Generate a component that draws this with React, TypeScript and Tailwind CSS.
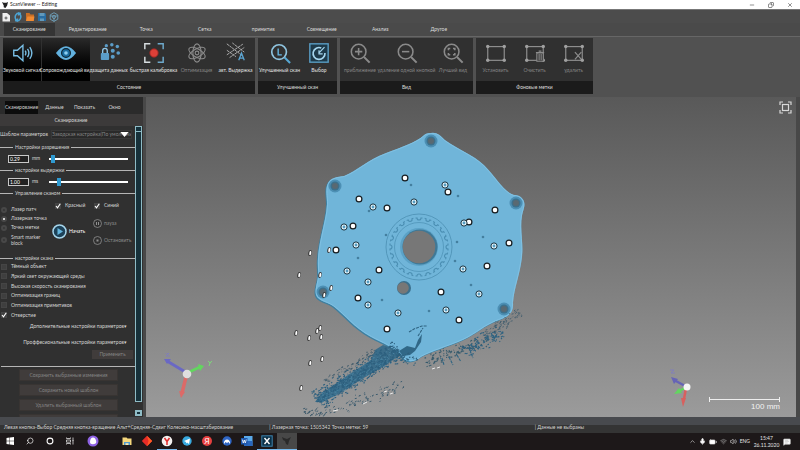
import { useState } from "react";
import type { ReactNode } from "react";
import { BatteryMedium, ChevronUp, Copy, MessageSquareText, Mic, Minus, Search, Volume2, Wifi, X } from "lucide-react";

const tabs = ["Сканирование", "Редактирование", "Точка", "Сетка", "примитив", "Совмещение", "Анализ", "Другое"];
const panelTabs = ["Сканирование", "Данные", "Показать", "Окно"];

const whiteMarks = [[405, 178], [448, 192], [359, 199], [387, 208], [495, 210], [353, 226], [469, 222], [336, 250], [509, 243], [487, 266], [379, 270], [358, 298], [441, 292], [459, 320], [387, 329]];
const blueMarks = [[445, 185], [373, 207], [414, 202], [344, 227], [356, 245], [464, 223], [494, 246], [347, 271], [463, 269], [368, 282], [368, 305], [479, 294], [446, 310], [398, 313]];
const pits = [[411, 185], [458, 196], [483, 237], [358, 258], [369, 211], [382, 300], [429, 311], [471, 285], [386, 235], [457, 242], [455, 261]];
const strays = [[310, 253], [329, 250], [299, 275], [320, 275], [331, 288], [324, 295], [296, 333], [309, 338], [317, 331], [320, 328], [321, 337], [322, 359], [310, 363], [301, 388]];
const lugs = [[431, 141], [335, 186], [516, 203], [323, 292], [504, 309]];

// seeded noise, so the cloud is the same on every render
function cloud(seed: number, n: number, x1: number, y1: number, x2: number, y2: number, spread: number) {
  let s = seed;
  const rnd = () => { s = (s * 16807) % 2147483647; return s / 2147483647; };
  const len = Math.hypot(x2 - x1, y2 - y1);
  let d = "";
  for (let i = 0; i < n; i++) {
    const t = rnd();
    const off = (rnd() + rnd() - 1) * spread;
    const x = x1 + (x2 - x1) * t - ((y2 - y1) / len) * off;
    const y = y1 + (y2 - y1) * t + ((x2 - x1) / len) * off;
    d += `M${x.toFixed(1)} ${y.toFixed(1)}l${(0.5 + rnd() * 1.5).toFixed(1)} ${(-rnd() * 1.2).toFixed(1)}`;
  }
  return d;
}

function Icon({ children, size = "size-[22px]" }: { children: ReactNode; size?: string }) {
  return <svg viewBox="0 0 24 24" className={`${size} shrink-0`} fill="none" stroke="currentColor" strokeWidth="1.5">{children}</svg>;
}

const SoundIcon = <Icon><g stroke="#79bfe6"><path d="M3 9h4l6-5.500v17L7 15H3z" /><path d="M15.500 9.500q1.500 2.500 0 5M18 7.500q3 4.500 0 9M20.500 5.500q4.500 6.500 0 13" /></g></Icon>;
const EyeIcon = <Icon><path d="M1 12Q12-3 23 12Q12 27 1 12z" fill="#62b1df" stroke="none" /><circle cx="12" cy="12" r="4.800" fill="#1b6c9f" stroke="#0d2533" strokeWidth="1.300" /><circle cx="12" cy="12" r="2" fill="#8bcdf0" stroke="none" /></Icon>;
const LockIcon = <Icon><g fill="#5b9dc9" stroke="none"><rect x="2" y="12" width="9" height="7.500" rx="1" /><circle cx="8" cy="4" r="1.800" /><circle cx="14" cy="3" r="1.900" /><circle cx="20" cy="5" r="1.900" /><circle cx="15" cy="9.500" r="2.200" /><circle cx="21" cy="12" r="2" /><circle cx="15" cy="16" r="2.200" /></g><path d="M4 12V9.500a2.500 2.500 0 0 1 5 0V12" stroke="#8fc6e8" /></Icon>;
const CalibIcon = <Icon><path d="M2 8V2h6M2 16v6h6" stroke="#d7dde0" strokeWidth="1.600" /><path d="M16 2h6v6M16 22h6v-6" stroke="#6ea9cb" strokeWidth="1.600" /><circle cx="12" cy="12" r="4.600" fill="#dd4038" stroke="#8e2623" strokeWidth="1" /></Icon>;
const AtomIcon = <Icon><g stroke="#8b8b8b" strokeWidth="1.200"><ellipse cx="12" cy="12" rx="4.500" ry="10" /><ellipse cx="12" cy="12" rx="4.500" ry="10" transform="rotate(60 12 12)" /><ellipse cx="12" cy="12" rx="4.500" ry="10" transform="rotate(120 12 12)" /><circle cx="12" cy="12" r="2" /></g></Icon>;
const ExposureIcon = <Icon><path d="M2 2l17 13M8 1l13 10M2 9l10 7M2 14L20 2M5 17L21 6" stroke="#b4b4b4" strokeWidth="1" strokeDasharray="3 .6" /><path d="M15 20l3-8 3 8M16 17.500h4" stroke="#5aa5d3" strokeWidth="1.400" /></Icon>;
const BetterIcon = <Icon><circle cx="11" cy="11" r="8" stroke="#8fc4df" strokeWidth="1.800" /><path d="M17 17l6 6" stroke="#56a7d3" strokeWidth="2.200" /><path d="M10 7v7h4" stroke="#66b7e2" /></Icon>;
const PickIcon = <Icon><rect x="2" y="2" width="20" height="20" stroke="#5a9fc6" fill="#1d3a4a" /><path d="M14.500 6.500A6.500 6.500 0 1 0 18.500 12" stroke="#a5d6ee" strokeWidth="1.800" /><path d="M11.500 12.500L18 5.500M12 9v4h4" stroke="#a5d6ee" strokeWidth="1.300" /></Icon>;

const Lens = ({ d }: { d: string }) => <Icon><g stroke="#8a8a8a"><circle cx="10.500" cy="10.500" r="8" strokeWidth="1.700" /><path d="M16.500 16.500l6 6" strokeWidth="2.300" /><path d={d} strokeWidth="1.700" /></g></Icon>;
const Frame = ({ children }: { children?: ReactNode }) => (
  <Icon><g stroke="#8d8d8d"><rect x="3" y="5" width="18" height="15" strokeWidth="1.300" /><g fill="#a0a0a0" stroke="none"><circle cx="3" cy="5" r="1.900" /><circle cx="21" cy="5" r="1.900" /><circle cx="3" cy="20" r="1.900" /><circle cx="21" cy="20" r="1.900" /></g>{children}</g></Icon>
);

type Tool = { label: string; icon: ReactNode; w: string; on?: boolean; off?: boolean };
const groups: { title: string; tools: Tool[] }[] = [
  {
    title: "Состояние",
    tools: [
      { label: "Звуковой сигнал", icon: SoundIcon, w: "w-[38px] mr-px", on: true },
      { label: "Сопровождающий вид", icon: EyeIcon, w: "w-[48px]", on: true },
      { label: "защита данных", icon: LockIcon, w: "w-[40px]" },
      { label: "быстрая калибровка", icon: CalibIcon, w: "w-[47px]" },
      { label: "Оптимизация", icon: AtomIcon, w: "w-[39px]", off: true },
      { label: "авт. Выдержка", icon: ExposureIcon, w: "w-[39px]" },
    ],
  },
  {
    title: "Улучшенный скан",
    tools: [
      { label: "Улучшенный скан", icon: BetterIcon, w: "w-[43px]" },
      { label: "Выбор", icon: PickIcon, w: "w-[36px]" },
    ],
  },
  {
    title: "Вид",
    tools: [
      { label: "приближение", icon: <Lens d="M6.500 10.500h8M10.500 6.500v8" />, w: "w-[40px]", off: true },
      { label: "удаление одной кнопкой", icon: <Lens d="M6.500 10.500h8" />, w: "w-[53px]", off: true },
      { label: "Лучший вид", icon: <Lens d="M7 9V7h2M12 7h2v2M14 12v2h-2M9 14H7v-2" />, w: "w-[40px]", off: true },
    ],
  },
  {
    title: "Фоновые метки",
    tools: [
      { label: "Установить", icon: <Frame />, w: "w-[39px]", off: true },
      { label: "Очистить", icon: <Frame><path d="M14 12h7v9h-7zM13 11.500h9M16 10h3M16.500 13v7M18.700 13v7" fill="#303030" strokeWidth="1.200" /></Frame>, w: "w-[39px]", off: true },
      { label: "удалить", icon: <Frame><path d="M13 11l7 8M20 11l-7 8" strokeWidth="1.300" /></Frame>, w: "w-[39px]", off: true },
    ],
  },
];

function Ribbon() {
  return (
    <div className="flex gap-[3px] bg-[#515151] px-[3px] pt-px pb-[3px]">
      {groups.map((g) => (
        <section key={g.title} className="flex flex-col bg-[#303030]">
          <div className="flex h-[43px]">
            {g.tools.map((t) => (
              <button key={t.label} className={`${t.w} flex flex-col items-center justify-between pt-[4px] pb-[7px] leading-[7px] whitespace-nowrap ${t.on ? "bg-gradient-to-b from-[#2a2a2a] to-black" : ""} ${t.off ? "text-[#858585]" : "text-[#e2e2e2]"}`}>
                {t.icon}
                {t.label}
              </button>
            ))}
          </div>
          <h2 className="h-[13px] bg-[#1b1b1b] text-center leading-[13px] text-[#dddddd]">{g.title}</h2>
        </section>
      ))}
    </div>
  );
}

function Legend({ text }: { text: string }) {
  return (
    <div className="flex h-[8px] items-center gap-[2px] text-[#d2d2d2]">
      <span className="h-px w-[13px] bg-[#b5b5b5]" />
      <h3>{text}</h3>
      <span className="h-px flex-1 bg-[#b5b5b5]" />
    </div>
  );
}

function CheckBox({ label, checked = false }: { label: string; checked?: boolean }) {
  return (
    <label className="flex items-center gap-[4px]">
      <span className="relative flex size-[6px]">
        <input type="checkbox" defaultChecked={checked} className="peer size-[6px] appearance-none border border-[#454545] bg-[#3f3f3f]" />
        <svg viewBox="0 0 6 6" className="pointer-events-none absolute inset-0 hidden peer-checked:block" fill="none" stroke="#fff" strokeWidth="1.100"><path d="M1 3l1.500 1.800L5.300.8" /></svg>
      </span>
      {label}
    </label>
  );
}

function Radio({ label, checked = false }: { label: string; checked?: boolean }) {
  return (
    <label className="flex min-h-[9px] items-center gap-[4px]">
      <input type="radio" name="mode" defaultChecked={checked} className="size-[6px] shrink-0 appearance-none rounded-full border-2 border-[#484848] bg-[#363636] checked:bg-white" />
      {label}
    </label>
  );
}

function Slider({ name, value, unit, pos }: { name: string; value: string; unit: string; pos: number }) {
  return (
    <div className="flex h-[15px] items-center pr-[7px] pl-[8px]">
      <input aria-label={name} defaultValue={value} className="h-[8px] w-[21px] border border-[#c8c8c8] bg-[#222] pl-px leading-[6px] text-white" />
      <span className="w-[20px] pl-[3px]">{unit}</span>
      <input
        type="range"
        aria-label={name}
        defaultValue={pos}
        className="h-[2px] min-w-0 flex-1 appearance-none bg-white [&::-webkit-slider-thumb]:h-[8px] [&::-webkit-slider-thumb]:w-[4px] [&::-webkit-slider-thumb]:appearance-none [&::-webkit-slider-thumb]:bg-[#2f9bd2]"
      />
    </div>
  );
}

function SidePanel() {
  const panelButton = "h-[12px] w-full shrink-0 border border-[#383432] bg-[#403c3b] text-[#858585]";
  return (
    <aside className="flex w-[143px] shrink-0 flex-col bg-[#303030] text-[#d6d6d6]">
      <nav className="flex h-[17px] items-center gap-[3px] bg-[#2b2b2b] pt-[3px] pl-[5px]">
        {panelTabs.map((t, i) => (
          <button key={t} className={`h-[13px] ${i === 0 ? "w-[33px] bg-[#0c0c0c]" : "w-[27px]"}`}>{t}</button>
        ))}
      </nav>
      <h2 className="h-[12px] bg-[#3c3a3a] pr-[1px] text-center leading-[12px]">Сканирование</h2>
      <div className="flex min-h-0 flex-1">
        <div className="flex min-w-0 flex-1 flex-col overflow-hidden">
          <div className="flex h-[17px] items-center gap-[3px]">
            <label htmlFor="tpl" className="whitespace-nowrap">Шаблон параметров</label>
            <div className="relative flex min-w-0 flex-1 pr-[3px]">
              <select id="tpl" className="h-[9px] w-full appearance-none border border-[#383838] bg-[#2a2a2a] pl-0 leading-[7px] text-[#858585]"><option>Заводская настройка(По умолчанию)</option></select>
              <svg viewBox="0 0 10 6" className="pointer-events-none absolute top-[2px] right-[6px] h-[5px] w-[9px]"><path d="M0 0h10L5 6z" fill="#fff" /></svg>
            </div>
          </div>
          <Legend text="Настройки разрешения" />
          <Slider name="Разрешение" value="0.29" unit="mm" pos={3} />
          <Legend text="настройки выдержки" />
          <Slider name="Выдержка" value="1.00" unit="ms" pos={10} />
          <Legend text="Управление сканом" />
          <div className="flex h-[57px] pt-[5px]">
            <div className="flex w-[51px] flex-col pt-[3px] pl-px">
              <Radio label="Лазер патч" />
              <Radio label="Лазерная точка" checked />
              <Radio label="Точка метки" />
              <label className="flex items-center gap-[4px] pt-[2px] leading-[6px]">
                <input type="radio" name="mode" className="size-[6px] shrink-0 appearance-none rounded-full border-2 border-[#484848] bg-[#363636] checked:bg-white" />
                <span>Smart marker<br />block</span>
              </label>
            </div>
            <div className="flex w-[41px] flex-col pl-px">
              <div className="pl-[3px]"><CheckBox label="Красный" checked /></div>
              <button className="mt-[15px] flex items-center gap-[2px] text-white">
                <svg viewBox="0 0 15 15" className="size-[15px]"><circle cx="7.500" cy="7.500" r="6.500" fill="#1d4259" stroke="#a5d5ec" strokeWidth="1.500" /><path d="M5.500 4l5.500 3.500L5.500 11z" fill="#63b5de" /></svg>
                Начать
              </button>
            </div>
            <div className="flex flex-1 flex-col pl-px">
              <div className="pl-px"><CheckBox label="Синий" checked /></div>
              <button className="mt-[10px] flex items-center gap-[2px] text-[#8c8c8c]">
                <svg viewBox="0 0 9 9" className="size-[9px]" fill="none" stroke="#909090"><circle cx="4.500" cy="4.500" r="4" strokeWidth=".8" /><path d="M3.500 3v3M5.500 3v3" /></svg>
                пауза
              </button>
              <button className="mt-[8px] flex items-center gap-[2px] text-[#8c8c8c]">
                <svg viewBox="0 0 9 9" className="size-[9px]" fill="none" stroke="#909090"><circle cx="4.500" cy="4.500" r="4" strokeWidth=".8" /><rect x="4" y="4" width="1" height="1" /></svg>
                Остановить
              </button>
            </div>
          </div>
          <Legend text="настройки скана" />
          <div className="flex h-[58px] flex-col justify-around pl-px">
            <CheckBox label="Тёмный объект" />
            <CheckBox label="Яркий свет окружающей среды" />
            <CheckBox label="Высокая скорость сканирования" />
            <CheckBox label="Оптимизация границ" />
            <CheckBox label="Оптимизация примитивов" />
            <CheckBox label="Отверстие" checked />
          </div>
          <button className="mt-[2px] h-[8px] pr-[8px] text-right">Дополнительные настройки параметров▾</button>
          <button className="mt-[8px] h-[8px] pr-[8px] text-right">Проффесиональные настройки параметров▾</button>
          <button className="mt-[4px] mr-[2px] h-[9px] w-[41px] shrink-0 self-end bg-[#403c3b] leading-[9px] text-[#858585]">Применить</button>
          <hr className="mt-[7px] ml-px shrink-0 border-[#b5b5b5]" />
          <div className="flex min-h-0 flex-1 flex-col gap-[3px] overflow-hidden pt-[2px] pr-[17px] pl-[19px]">
            <button className={panelButton}>Сохранить выбранные изменения</button>
            <button className={panelButton}>Сохранить новый шаблон</button>
            <button className={panelButton}>Удалить выбранный шаблон</button>
            <button className={panelButton} aria-label="Ещё" />
          </div>
        </div>
        <div className="flex w-[8px] flex-col pr-px pb-px">
          <span className="h-[6px] border border-[#8fbcc6] bg-[#16323c]" />
          <span className="flex-1 border border-t-0 border-[#8fbcc6] bg-[#17313a]" />
          <span className="mt-[8px] h-[6px] border-2 border-[#8fbcc6] bg-[#16323c]" />
        </div>
      </div>
    </aside>
  );
}

function Part() {
  const studs = Array.from({ length: 20 }, (_, i) => (i * Math.PI * 2) / 20);
  const outline = "M431 133C437 132 440 135 445 140C459 150 472 154 484 165C496 177 504 192 514 195C522 195 526 201 524 208C518 225 524 240 522 257C520 275 514 288 513 303C514 313 508 317 499 320C483 326 478 333 463 340C447 347 432 351 421 357C414 363 406 363 401 356C394 347 382 343 371 337C353 327 346 316 333 306C325 301 318 301 316 295C314 288 319 281 318 270C316 246 326 224 327 204C327 196 325 189 328 183C331 177 338 177 344 176C357 171 367 160 386 153C402 147 416 142 423 136C426 133 428 133 431 133Z";
  return (
    <svg viewBox="146 97 650 320" preserveAspectRatio="xMidYMid slice" className="absolute inset-0 h-full w-full">
      <path d={outline} fill="#3f7f9f" transform="translate(-1 1)" />
      <path d={outline} fill="#70b5d9" />
      <path d={outline} fill="none" stroke="#84c4e4" strokeWidth=".8" transform="translate(2.500 1.500) scale(.994)" />
      {lugs.map(([x, y]) => (
        <g key={x}><circle cx={x} cy={y} r="6.500" fill="#4c8fb4" /><circle cx={x} cy={y} r="4.500" fill="#3d708b" /><circle cx={x} cy={y} r="3" fill="#596972" /></g>
      ))}
      <g fill="none" stroke="#4b8fb3">
        <circle cx="419" cy="247" r="33" strokeWidth=".8" />
        <circle cx="419" cy="247" r="24.500" strokeWidth=".7" />
        {studs.map((a) => <path key={a} d="M-3.500 0h1.500a2 2 0 1 0 4 0h1.500" transform={`translate(${419 + Math.cos(a) * 29} ${247 + Math.sin(a) * 29}) rotate(${(a * 180) / Math.PI + 90})`} strokeWidth="1.100" />)}
      </g>
      <circle cx="419" cy="247" r="19" fill="#5ba2c7" />
      <circle cx="420" cy="247" r="17.500" fill="#3f7896" />
      <circle cx="419" cy="247" r="16.300" fill="#777" />
      <circle cx="404" cy="288" r="7" fill="#3a6f8c" />
      <circle cx="403" cy="288" r="5.800" fill="#777" />
      {pits.map(([x, y]) => <circle key={`${x}-${y}`} cx={x} cy={y} r="1.300" fill="#447f9f" />)}

      <path d="M315 402L320 395L345 377L371 360L375 350L383 345L397 350L400 355L386 365L362 379L340 393L323 402Z" fill="#326989" opacity=".9" />
      <path d="M399 351l8-5 8 2 3-8 4-6-1 8-6 9-5 4-7 1z" fill="#316887" />
      <g fill="none" strokeWidth="1.100">
        <path d={cloud(17, 560, 316, 401, 398, 350, 12)} stroke="#2c5f7e" />
        <path d={cloud(81, 170, 320, 400, 395, 352, 8)} stroke="#4b86a5" strokeWidth=".7" />
        <path d={cloud(23, 70, 325, 382, 375, 350, 4)} stroke="#3c5868" strokeWidth=".8" />
        <path d={cloud(29, 110, 425, 362, 487, 341, 7)} stroke="#355a6c" />
        <path d={cloud(47, 110, 463, 352, 502, 332, 9)} stroke="#2f6280" />
        <path d={cloud(53, 80, 484, 338, 519, 311, 7)} stroke="#37576a" strokeWidth=".8" />
        <path d={cloud(59, 65, 345, 407, 402, 384, 9)} stroke="#33566a" strokeWidth=".9" />
        <path d={cloud(61, 45, 304, 414, 343, 408, 6)} stroke="#365568" strokeWidth=".9" />
        <path d={cloud(67, 35, 394, 355, 415, 363, 8)} stroke="#2e5f7b" />
        <path d="M409 332l5-3 8-3 5 0M418 336l5-8M442 358l2 7M449 357l4 8M457 355l4 7M470 350l3 8M475 343l6 6M491 333l4 7M497 334l-4 7" stroke="#2f6482" strokeDasharray="3 1" />
      </g>

      {whiteMarks.map(([x, y]) => <circle key={`${x}-${y}`} cx={x} cy={y} r="2.900" fill="#fff" stroke="#151b1f" strokeWidth="1.200" />)}
      {blueMarks.map(([x, y]) => (
        <g key={`${x}-${y}`}><circle cx={x} cy={y} r="3.100" fill="#e3f3fa" stroke="#1b3542" strokeWidth="1" /><circle cx={x} cy={y} r="1.400" fill="#559dc2" /></g>
      ))}
      {strays.map(([x, y]) => (
        <g key={`${x}-${y}`} transform={`rotate(10 ${x} ${y})`}><ellipse cx={x} cy={y} rx="1.700" ry="3.100" fill="#333" /><ellipse cx={x + 0.3} cy={y} rx="1" ry="2.200" fill="#fff" /></g>
      ))}
      <path d="M432 369l3-1M437 368l3-1M363 404l4-2M384 392l3-1M390 394l3-1M333 411l5-1" stroke="#e8e8e8" />
    </svg>
  );
}

function Viewport() {
  return (
    <main className="relative min-w-0 flex-1 overflow-hidden bg-gradient-to-b from-[#595959] to-[#9b9b9b]">
      <Part />
      <button aria-label="Во весь экран" className="absolute top-[4px] right-[4px]">
        <svg viewBox="0 0 13 13" className="size-[13px]" fill="none" stroke="#d8d8d8" strokeWidth="1.200"><path d="M1 4V1h3M9 1h3v3M12 9v3H9M4 12H1V9" /><rect x="3.500" y="3.500" width="6" height="6" /></svg>
      </button>
      <svg viewBox="0 0 54 46" className="absolute bottom-[18px] left-[16px] h-[46px] w-[54px]" fill="none">
        <path d="M25 20L5 8" stroke="#6a68c4" strokeWidth="3" /><path d="M2 6h7l-4 5z" fill="#6a68c4" />
        <path d="M25 20L38 14" stroke="#62d65f" strokeWidth="3" /><path d="M36 11l6 2-4 5z" fill="#62d65f" />
        <path d="M25 20l-5 20" stroke="#dc6a68" strokeWidth="3.500" /><path d="M17 38l6 1-4 6z" fill="#dc6a68" />
        <circle cx="25" cy="21" r="4.300" fill="#dedede" />
        <path d="M46 8l2 2 2-2M48 10l-1 3" stroke="#7bd878" /><path d="M3 0h4L4 3h4" stroke="#7d7bc4" strokeWidth=".8" />
      </svg>
      <svg viewBox="0 0 26 40" className="absolute right-[103px] bottom-[8px] h-[40px] w-[26px]" fill="none">
        <path d="M20 18L7 11" stroke="#6664b6" strokeWidth="2.500" /><path d="M4 8l7 2-4 5z" fill="#6664b6" />
        <path d="M20 18l-8 4" stroke="#62d65f" strokeWidth="2.500" /><path d="M12 19l3 5-8 1z" fill="#62d65f" />
        <path d="M19 19l-2 11" stroke="#d8605e" strokeWidth="2.500" /><path d="M14 29h5l-3 9z" fill="#d8605e" />
        <circle cx="20" cy="18" r="3.500" fill="#f5f5f5" /><path d="M3 1h4L4 4h4" stroke="#7d7bc4" strokeWidth=".8" />
      </svg>
      <div className="absolute right-[16px] bottom-[5px] w-[71px] text-right font-['Liberation_Sans',Arial,sans-serif] text-[8px] leading-[10px] text-[#f2f2f2]">
        <div className="flex h-[5px] items-center border-x border-[#eee]"><span className="h-px flex-1 bg-[#eee]" /></div>
        100 mm
      </div>
    </main>
  );
}

function TaskIcon({ children, label, active, open }: { children: ReactNode; label: string; active?: boolean; open?: boolean }) {
  return (
    <button aria-label={label} className={`flex h-full w-[20px] items-center justify-center border-b ${active ? "bg-[#484848]" : ""} ${active || open ? "border-[#76b9ed]" : "border-transparent"}`}>
      {children}
    </button>
  );
}

function TaskBar() {
  const ic = "size-[10px]";
  return (
    <footer className="flex h-[17px] items-stretch justify-between bg-[#1d1819] text-white">
      <div className="flex">
        <TaskIcon label="Пуск"><svg viewBox="0 0 10 10" className={ic} fill="#fff"><path d="M1.500 2L4.600 1.500v3.300H1.500zM5 1.500L9 1v3.800H5zM1.500 5.200h3.100v3.300L1.500 8zM5 5.200h4V9L5 8.500z" /></svg></TaskIcon>
        <TaskIcon label="Поиск"><Search className="size-[8px] -scale-x-100" /></TaskIcon>
        <TaskIcon label="Cortana"><svg viewBox="0 0 10 10" className={ic}><circle cx="5" cy="5" r="2.900" fill="none" stroke="#fff" strokeWidth="1.100" /></svg></TaskIcon>
        <TaskIcon label="Представление задач"><svg viewBox="0 0 10 10" className={ic} fill="none" stroke="#ddd" strokeWidth=".8"><path d="M1.500 1.500v1h4v-1M1.500 8.500v-1h4v1M1.500 4h4v2.200h-4zM8 1.500v7M7.500 4.500h1" /></svg></TaskIcon>
        <div className="flex w-[37px] pl-[3px]"><TaskIcon label="Алиса"><svg viewBox="0 0 12 12" className="size-[12px]"><circle cx="6" cy="6" r="5.500" fill="#8f63e5" /><path d="M6 2.500c3 0 4 5 2.500 6s-4 1-5 0S3 2.500 6 2.500z" fill="#fff" /></svg></TaskIcon></div>
        <TaskIcon label="Проводник"><svg viewBox="0 0 10 10" className={ic}><path d="M.5 1.500h4l1 1h4v6.500h-9z" fill="#f5d77c" /><path d="M2 6h6v3H2z" fill="#5099cc" /><path d="M3.500 7.200h3V9h-3z" fill="#f7e6ad" /></svg></TaskIcon>
        <TaskIcon label="AnyDesk"><svg viewBox="0 0 12 12" className="size-[12px]"><path d="M6 .8L11.200 6 6 11.200.8 6z" fill="#e52c27" /><path d="M6 .8L11.200 6 6 11.200 7.500 6z" fill="#ff5a26" /></svg></TaskIcon>
        <TaskIcon label="Яндекс Браузер" open><svg viewBox="0 0 12 12" className="size-[12px]"><circle cx="6" cy="6" r="5.300" fill="#f4f1f0" /><path d="M3.500 3L6 6.500V10M8.500 3L6 6.500" stroke="#e02b2b" strokeWidth="1.500" fill="none" /></svg></TaskIcon>
        <TaskIcon label="Telegram"><svg viewBox="0 0 10 10" className={ic}><circle cx="5" cy="5" r="4.700" fill="#38a9df" /><path d="M2 5l6-2.500-1 5.500-2-1.500-1 1V6z" fill="#fff" /></svg></TaskIcon>
        <TaskIcon label="Яндекс"><span className="size-[10px] rounded-full bg-[#e6403f] text-[8px] leading-[10px]">Я</span></TaskIcon>
        <TaskIcon label="NordVPN"><svg viewBox="0 0 10 10" className={ic}><circle cx="5" cy="5" r="4.700" fill="#2f66c4" /><path d="M2 8c-1-6 7-6 6 0L6.500 6 5 7 3.500 6z" fill="#fff" /></svg></TaskIcon>
        <TaskIcon label="Word"><svg viewBox="0 0 12 12" className="size-[12px]"><rect x="3" y="1" width="8.500" height="10" fill="#5aa9ea" /><path d="M3 6h8.500v5H3z" fill="#2866bd" /><rect y="3" width="6.500" height="6.500" fill="#1e58ae" /><path d="M1.300 4.500l1 3.500 1-3 1 3 1-3.500" stroke="#fff" strokeWidth=".8" fill="none" /></svg></TaskIcon>
        <TaskIcon label="VXelements" open><svg viewBox="0 0 12 12" className="size-[12px]"><rect x=".8" y=".8" width="10.400" height="10.400" fill="#0b3047" stroke="#3c82ab" /><path d="M3.500 3l5 6M8.500 3l-5 6" stroke="#fff" strokeWidth="1.400" /></svg></TaskIcon>
        <TaskIcon label="ScanViewer" active><svg viewBox="0 0 10 10" className={ic} fill="#2a2a2a"><path d="M0 1l2 1 3 1 4-2-2 4-1 4-2-1-1-3-2-1z" /></svg></TaskIcon>
      </div>
      <div className="flex items-center gap-[3px] pr-[9px] text-[#e6e6e6]">
        <ChevronUp className="size-[7px]" />
        <Mic className="size-[7px] fill-white" />
        <BatteryMedium className="size-[8px] fill-white" />
        <Wifi className="size-[7px] text-[#aaa]" />
        <Volume2 className="size-[7px]" />
        <span>ENG</span>
        <div className="w-[27px] text-center">15:47<br />26.11.2020</div>
        <MessageSquareText className="size-[8px] fill-white text-[#bbb]" />
      </div>
    </footer>
  );
}

export default function App() {
  const [tab, setTab] = useState(tabs[0]);

  return (
    <div className="flex h-screen flex-col overflow-hidden bg-[#484848] font-[Lato,'Liberation_Sans',sans-serif] text-[5px] leading-[7px]">
      <header className="flex h-[9px] shrink-0 items-center justify-between bg-white px-[2px] text-[#222]">
        <div className="flex items-center gap-[2px]">
          <svg viewBox="0 0 7 7" className="size-[6px]"><path d="M0 0l2 1h3l2-1-1 4-2 3-2-1V4z" fill="#222" /></svg>
          <h1>ScanViewer -- Editing</h1>
        </div>
        <div className="flex gap-[13px] pr-[5px]">
          <button aria-label="Свернуть"><Minus className="size-[6px]" /></button>
          <button aria-label="Развернуть"><Copy className="size-[6px] -scale-x-100" /></button>
          <button aria-label="Закрыть"><X className="size-[6px]" /></button>
        </div>
      </header>

      <div className="flex h-[14px] shrink-0 items-center gap-[2px] border-t border-[#777] bg-[#4c4c4c] pl-px">
        <button aria-label="Новый"><svg viewBox="0 0 10 10" className="size-[10px]"><path d="M1.500 1H6l3 2.500V9.500H1.500z" fill="#eee" /><path d="M5 4.500v3M3.500 6h3" stroke="#555" /></svg></button>
        <button aria-label="Обновить"><svg viewBox="0 0 10 10" className="size-[10px]" fill="none" stroke="#4ca4d4" strokeWidth="1.500"><path d="M4.500 1Q0 5 4 9M2 8.500l2.500.5V6.500M5.500 9Q10 5 6 1M8 1.500L5.500 1v2.500" /></svg></button>
        <button aria-label="Открыть"><svg viewBox="0 0 10 10" className="size-[10px]"><path d="M1 1h3.500l1 1.500H9V9H1z" fill="#c96f24" /><path d="M2.500 4.500h7L8.500 9H1z" fill="#f18b32" /></svg></button>
        <button aria-label="Сохранить"><svg viewBox="0 0 10 10" className="size-[10px]"><path d="M1 1h7l1 1v7H1z" fill="#286da3" /><path d="M2.500 1h5v3h-5zM3 6.500h4V9H3z" fill="#6299bb" /></svg></button>
        <button aria-label="Настройки"><svg viewBox="0 0 10 10" className="size-[10px]" fill="none" stroke="#6fa3bd" strokeWidth=".9"><path d="M5 .7l3.800 2.200v4.300L5 9.400 1.200 7.200V2.900zM1.200 4h7.600M5 5.500v4" /><circle cx="5" cy="5" r="1.500" /></svg></button>
      </div>

      <nav className="flex h-[14px] shrink-0 items-end border-b border-[#666] bg-[#4a4a4a]">
        <div className="grid w-[468px] grid-cols-8">
          {tabs.map((t) => (
            <div key={t} className="flex px-[4px]">
              <button onClick={() => setTab(t)} className={`h-[13px] flex-1 text-[#dcdcdc] ${t === tab ? "bg-[#353535]" : ""}`}>{t}</button>
            </div>
          ))}
        </div>
      </nav>
      <Ribbon />

      <div className="flex min-h-0 flex-1 gap-[3px] pr-[4px]">
        <SidePanel />
        <Viewport />
      </div>

      <div className="h-[8px] shrink-0 bg-[#484a4e]" />
      <div className="flex h-[8px] shrink-0 bg-[#343434] pl-[4px] leading-[5px] whitespace-nowrap text-[#d6d6d6]">
        <p className="w-1/3">Левая кнопка-Выбор Средняя кнопка-вращение Альт+Средняя-Сдвиг Колесико-масштабирование</p>
        <p className="w-1/3">| Лазерная точка: 1505342 Точка метки: 59</p>
        <p className="w-1/3">| Данные не выбраны</p>
      </div>
      <TaskBar />
    </div>
  );
}
